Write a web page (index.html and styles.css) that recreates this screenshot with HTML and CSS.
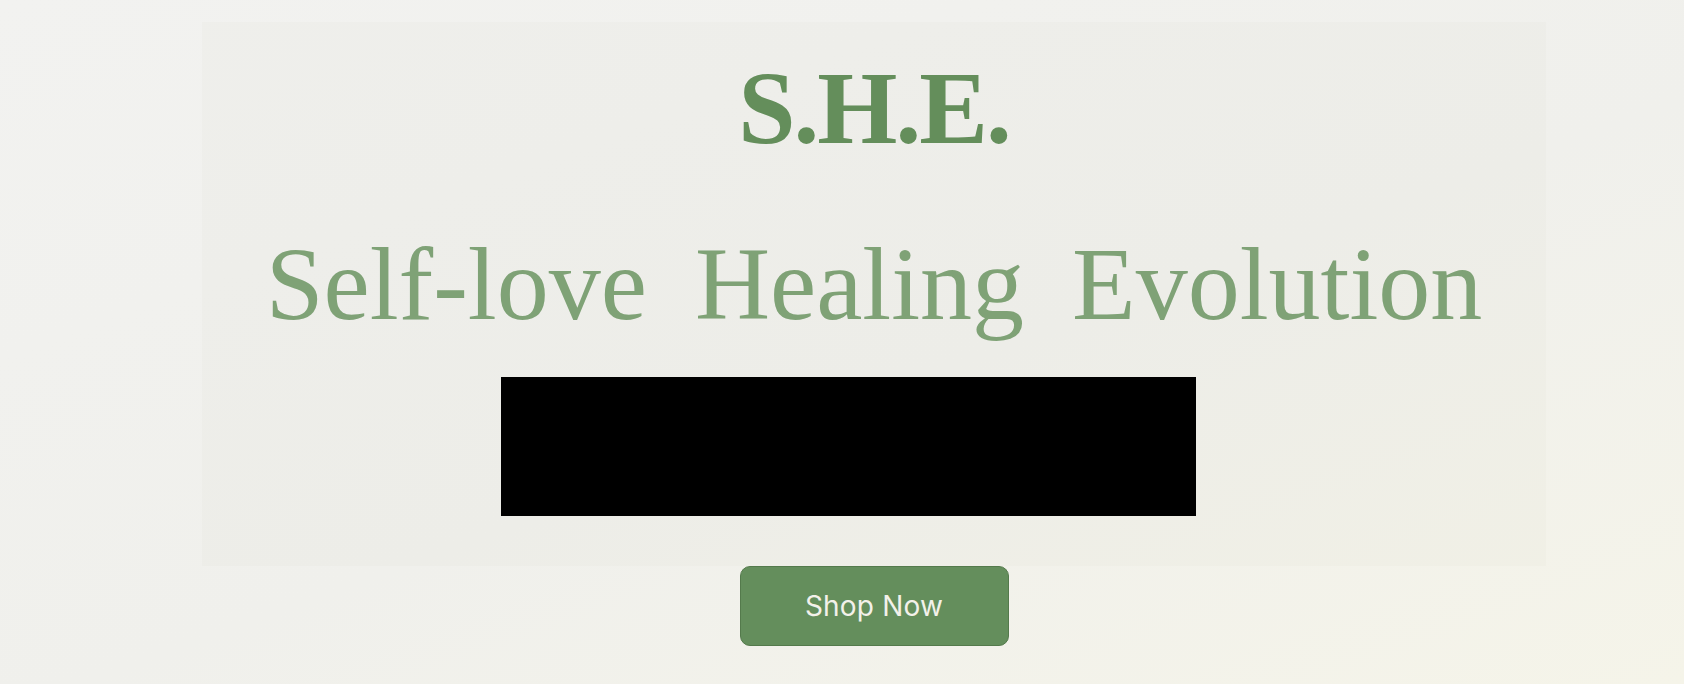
FILE: index.html
```html
<!DOCTYPE html>
<html lang="en">
<head>
<meta charset="utf-8">
<title>S.H.E.</title>
<link rel="stylesheet" href="styles.css">
</head>
<body>
<main class="page">
  <section class="hero">
    <h1 class="brand">S.H.E.</h1>
    <h2 class="tagline">Self-love Healing Evolution</h2>
    <div class="media"></div>
  </section>
  <a class="shop-btn" href="#">Shop Now</a>
</main>
</body>
</html>
```
FILE: styles.css
```css
html, body {
  margin: 0;
  padding: 0;
  height: 100%;
}
body {
  background: linear-gradient(160deg, #f2f2f0 0%, #f0f0ec 55%, #f5f4e9 100%);
  overflow: hidden;
}
.page {
  display: flex;
  flex-direction: column;
  align-items: center;
  width: 1344px;
  margin-left: 202px;
  padding-top: 22px;
}
.hero {
  width: 100%;
  box-sizing: border-box;
  display: flex;
  flex-direction: column;
  align-items: center;
  padding: 35px 0 50px;
  background: rgba(228, 225, 218, 0.18);
}
.brand {
  margin: 0;
  font-family: "Liberation Serif", "Times New Roman", serif;
  font-weight: 700;
  font-size: 103px;
  line-height: 1;
  letter-spacing: -2px;
  color: #648e5b;
}
.tagline {
  margin: 72px 0 0;
  font-family: "Liberation Serif", "Times New Roman", serif;
  font-weight: 400;
  font-size: 104px;
  line-height: 1;
  letter-spacing: 0;
  word-spacing: 22px;
  color: #7fa276;
  white-space: nowrap;
}
.media {
  align-self: flex-start;
  margin: 41px 0 0 299px;
  width: 695px;
  height: 139px;
  background: #000;
}
.shop-btn {
  display: flex;
  align-items: center;
  justify-content: center;
  box-sizing: border-box;
  width: 269px;
  height: 80px;
  background: #648e5c;
  border: 1px solid #547a4c;
  border-radius: 10px;
  color: #f3f1ea;
  font-family: Inter, "Noto Sans", sans-serif;
  font-size: 28px;
  letter-spacing: 0.2px;
  text-decoration: none;
}
```
